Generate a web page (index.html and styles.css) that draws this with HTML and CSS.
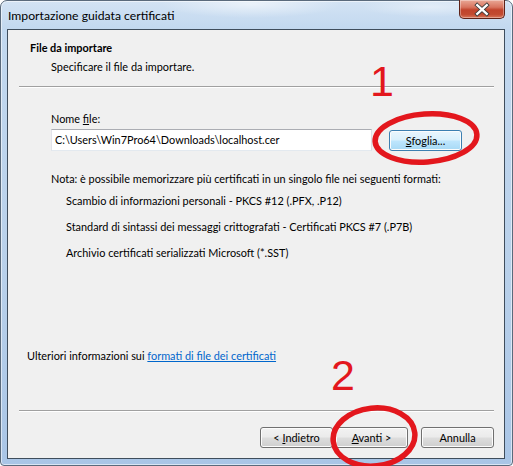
FILE: index.html
```html
<!DOCTYPE html>
<html lang="it">
<head>
<meta charset="utf-8">
<title>Importazione guidata certificati</title>
<link rel="stylesheet" href="styles.css">
</head>
<body>
<div class="window">
  <div class="titlebar">
    <span class="title">Importazione guidata certificati</span>
    <span class="close">
      <svg width="46" height="19" viewBox="0 0 46 19">
        <path d="M18 5 L28 14 M28 5 L18 14" stroke="#3a3a3a" stroke-width="4.2" stroke-linecap="square" fill="none"/>
        <path d="M18 5 L28 14 M28 5 L18 14" stroke="#ffffff" stroke-width="2.4" stroke-linecap="square" fill="none"/>
      </svg>
    </span>
  </div>
  <div class="client">
    <div class="header">
      <div class="h-title">File da importare</div>
      <div class="h-sub">Specificare il file da importare.</div>
    </div>
    <div class="sep top-sep"></div>
    <div class="body">
      <div class="label">Nome <u>f</u>ile:</div>
      <div class="file-row">
        <div class="input">C:\Users\Win7Pro64\Downloads\localhost.cer</div>
        <button class="btn btn-focus"><u>S</u>foglia...</button>
      </div>
      <div class="note">Nota: è possibile memorizzare più certificati in un singolo file nei seguenti formati:</div>
      <ul class="formats">
        <li>Scambio di informazioni personali - PKCS #12 (.PFX, .P12)</li>
        <li>Standard di sintassi dei messaggi crittografati - Certificati PKCS #7 (.P7B)</li>
        <li>Archivio certificati serializzati Microsoft (*.SST)</li>
      </ul>
    </div>
    <div class="more">Ulteriori informazioni sui <a href="#">formati di file dei certificati</a></div>
    <div class="sep bottom-sep"></div>
    <div class="buttons">
      <button class="btn">&lt; <u>I</u>ndietro</button>
      <button class="btn"><u>A</u>vanti &gt;</button>
      <button class="btn btn-cancel">Annulla</button>
    </div>
  </div>

  <svg class="annot" width="513" height="466" viewBox="0 0 513 466">
    <ellipse cx="426" cy="138" rx="51" ry="24" transform="rotate(-4 426 138)" fill="none" stroke="#e3171d" stroke-width="5.5"/>
    <ellipse cx="374" cy="437" rx="41" ry="29" transform="rotate(-6 374 437)" fill="none" stroke="#e3171d" stroke-width="5.5"/>
  </svg>
  <span class="num num1">1</span>
  <span class="num num2">2</span>
</div>
</body>
</html>
```

FILE: styles.css
```css
* { box-sizing: border-box; }
html, body { margin: 0; padding: 0; }
body {
  width: 513px;
  height: 466px;
  overflow: hidden;
  background: #ffffff;
  font-family: Lato, "Noto Sans", "DejaVu Sans", sans-serif;
  font-size: 10.9px;
  color: #000;
}
.window {
  position: relative;
  width: 513px;
  height: 466px;
  display: flex;
  flex-direction: column;
  border: 1px solid #5a6a7c;
  border-radius: 7px 7px 4px 4px;
  background:
    radial-gradient(ellipse 90px 14px at 250px 3px, rgba(255,255,255,0.55), rgba(255,255,255,0) 100%),
    radial-gradient(ellipse 70px 10px at 430px 6px, rgba(255,255,255,0.4), rgba(255,255,255,0) 100%),
    linear-gradient(180deg, #d3e3f4 0px, #c2d8ef 28px, #b8d0ea 60%, #a9c5e6 100%);
  box-shadow: inset 0 0 0 1px rgba(255,255,255,0.55);
}
.titlebar {
  height: 28px;
  display: flex;
  align-items: flex-start;
  justify-content: space-between;
  padding-left: 7px;
}
.title {
  margin-top: 7px;
  font-size: 12.2px;
  line-height: 15px;
  color: #000;
}
.close {
  width: 46px;
  height: 19px;
  margin-right: 7px;
  margin-top: -1px;
  border: 1px solid #5e2218;
  border-top: none;
  border-radius: 0 0 5px 5px;
  background: linear-gradient(180deg, #e9a896 0%, #d8745f 40%, #c1442c 55%, #c24a30 80%, #d9765a 100%);
  box-shadow: inset 0 0 0 1px rgba(255,255,255,0.35);
  display: flex;
}
.close svg { display: block; }
.client {
  flex: 1;
  margin: 0 7px 6px 6px;
  border: 1px solid #3f4d5c;
  background: #f0f0f0;
  display: flex;
  flex-direction: column;
}
.header {
  padding: 10px 0 0 22px;
}
.h-title {
  font-weight: bold;
  line-height: 16px;
}
.h-sub {
  margin: 3px 0 0 21px;
  line-height: 16px;
}
.sep {
  height: 2px;
  border-top: 1px solid #a0a0a0;
  border-bottom: 1px solid #ffffff;
  margin: 0 10px 0 11px;
}
.top-sep { margin-top: 11px; }
.body {
  flex: 1;
  padding-left: 43px;
  white-space: nowrap;
}
.label {
  margin-top: 23px;
  line-height: 16px;
}
.file-row {
  margin-top: 2px;
  display: flex;
  align-items: center;
  gap: 17px;
}
.input {
  width: 321px;
  height: 22px;
  background: #fff;
  border: 1px solid #abadb3;
  border-left-color: #e2e3ea;
  border-right-color: #dbdfe6;
  border-bottom-color: #e3e9ef;
  padding: 2px 3px;
  line-height: 16px;
  white-space: nowrap;
  overflow: hidden;
}
.btn {
  font-family: inherit;
  font-size: 10.9px;
  color: #000;
  height: 21px;
  width: 73px;
  padding: 0;
  line-height: 17px;
  border: 1px solid #707070;
  border-radius: 3px;
  background: linear-gradient(180deg, #f2f2f2 0%, #ebebeb 48%, #dddddd 52%, #cfcfcf 100%);
  box-shadow: inset 0 0 0 1px #fcfcfc;
}
.btn-focus {
  border-color: #3c7fb1;
  background: linear-gradient(180deg, #eaf6fd 0%, #d9f0fc 48%, #bee6fd 52%, #a7d9f5 100%);
}
.note {
  margin-top: 20px;
  line-height: 16px;
}
.formats {
  list-style: none;
  margin: 6px 0 0 15px;
  padding: 0;
}
.formats li {
  line-height: 16px;
  margin-bottom: 10px;
}
.more {
  padding-left: 19px;
  line-height: 16px;
}
.more a {
  color: #0066cc;
  text-decoration: underline;
}
.bottom-sep { margin-top: 46px; }
.buttons {
  display: flex;
  justify-content: flex-end;
  padding: 15px 10px 0 0;
  height: 46px;
}
.buttons .btn + .btn { margin-left: 2px; }
.buttons .btn-cancel { margin-left: 13px !important; }
.annot {
  position: absolute;
  left: -1px;
  top: -1px;
  pointer-events: none;
}
.num {
  position: absolute;
  font-family: "Liberation Sans", Arial, sans-serif;
  font-size: 43px;
  line-height: 43px;
  color: #e3171d;
}
.num1 { left: 369px; top: 59px; }
.num2 { left: 330px; top: 353px; }
```
